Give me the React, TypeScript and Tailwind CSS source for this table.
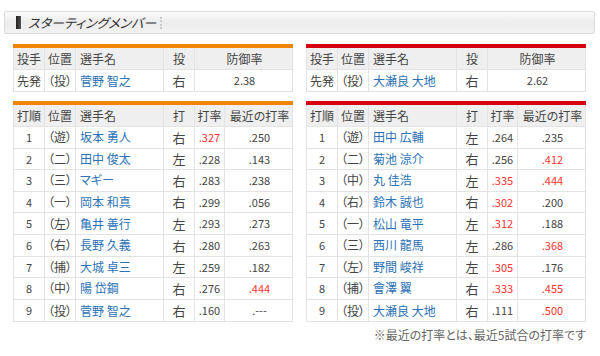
const font = { fontFamily: '"Noto Sans CJK JP", "Noto Sans", sans-serif' };

type Batter = { order: number; pos: string; name: string; hand: string; avg: string; recent: string; avgRed?: boolean; recentRed?: boolean };

const giants: Batter[] = [
  { order: 1, pos: '遊', name: '坂本 勇人', hand: '右', avg: '.327', recent: '.250', avgRed: true },
  { order: 2, pos: '二', name: '田中 俊太', hand: '左', avg: '.228', recent: '.143' },
  { order: 3, pos: '三', name: 'マギー', hand: '右', avg: '.283', recent: '.238' },
  { order: 4, pos: '一', name: '岡本 和真', hand: '右', avg: '.299', recent: '.056' },
  { order: 5, pos: '左', name: '亀井 善行', hand: '左', avg: '.293', recent: '.273' },
  { order: 6, pos: '右', name: '長野 久義', hand: '右', avg: '.280', recent: '.263' },
  { order: 7, pos: '捕', name: '大城 卓三', hand: '左', avg: '.259', recent: '.182' },
  { order: 8, pos: '中', name: '陽 岱鋼', hand: '右', avg: '.276', recent: '.444', recentRed: true },
  { order: 9, pos: '投', name: '菅野 智之', hand: '右', avg: '.160', recent: '.---' },
];

const carp: Batter[] = [
  { order: 1, pos: '遊', name: '田中 広輔', hand: '左', avg: '.264', recent: '.235' },
  { order: 2, pos: '二', name: '菊池 涼介', hand: '右', avg: '.256', recent: '.412', recentRed: true },
  { order: 3, pos: '中', name: '丸 佳浩', hand: '左', avg: '.335', recent: '.444', avgRed: true, recentRed: true },
  { order: 4, pos: '右', name: '鈴木 誠也', hand: '右', avg: '.302', recent: '.200', avgRed: true },
  { order: 5, pos: '一', name: '松山 竜平', hand: '左', avg: '.312', recent: '.188', avgRed: true },
  { order: 6, pos: '三', name: '西川 龍馬', hand: '左', avg: '.286', recent: '.368', recentRed: true },
  { order: 7, pos: '左', name: '野間 峻祥', hand: '左', avg: '.305', recent: '.176', avgRed: true },
  { order: 8, pos: '捕', name: '會澤 翼', hand: '右', avg: '.333', recent: '.455', avgRed: true, recentRed: true },
  { order: 9, pos: '投', name: '大瀬良 大地', hand: '右', avg: '.111', recent: '.500', recentRed: true },
];

const pcols = 'grid grid-cols-[31px_31px_88px_31px_99px]';
const bcols = 'grid grid-cols-[31px_31px_88px_31px_30px_69px]';
const cell = 'flex items-center justify-center border-r border-[#e3e3e3] last:border-r-0';

function PitcherTable({ bar, name, era }: { bar: string; name: string; era: string }) {
  return (
    <div className="w-[280px]">
      <div className={`h-[4px] ${bar}`} />
      <div className="border-x border-b border-[#e3e3e3]">
        <div className={`${pcols} h-[22px] bg-[#efefef] border-b border-[#e3e3e3] text-[12px] text-[#444]`}>
          <div className={cell}>投手</div>
          <div className={cell}>位置</div>
          <div className={`${cell} !justify-start pl-[4px]`}>選手名</div>
          <div className={cell}>投</div>
          <div className={cell}>防御率</div>
        </div>
        <div className={`${pcols} h-[21px] text-[12px] text-[#444]`}>
          <div className={cell}>先発</div>
          <div className={cell}>（投）</div>
          <div className={`${cell} !justify-start pl-[4px] text-[#2b72b6]`}>{name}</div>
          <div className={`${cell} text-[13px]`}>右</div>
          <div className={`${cell} text-[11px]`}>{era}</div>
        </div>
      </div>
    </div>
  );
}

function BattingTable({ bar, rows }: { bar: string; rows: Batter[] }) {
  return (
    <div className="w-[280px]">
      <div className={`h-[4px] ${bar}`} />
      <div className="border-x border-b border-[#e3e3e3]">
        <div className={`${bcols} h-[22px] bg-[#efefef] border-b border-[#e3e3e3] text-[12px] text-[#444]`}>
          <div className={cell}>打順</div>
          <div className={cell}>位置</div>
          <div className={`${cell} !justify-start pl-[4px]`}>選手名</div>
          <div className={cell}>打</div>
          <div className={cell}>打率</div>
          <div className={cell}>最近の打率</div>
        </div>
        {rows.map(r => (
          <div key={r.order} className={`${bcols} h-[21.6px] border-b border-[#e3e3e3] last:border-b-0 text-[12px] text-[#444]`}>
            <div className={`${cell} text-[11px]`}>{r.order}</div>
            <div className={cell}>（{r.pos}）</div>
            <div className={`${cell} !justify-start pl-[4px] text-[#2b72b6]`}>{r.name}</div>
            <div className={`${cell} text-[13px]`}>{r.hand}</div>
            <div className={`${cell} text-[11px] ${r.avgRed ? 'text-[#ff3333]' : ''}`}>{r.avg}</div>
            <div className={`${cell} text-[11px] ${r.recentRed ? 'text-[#ff3333]' : ''}`}>{r.recent}</div>
          </div>
        ))}
      </div>
    </div>
  );
}

export default function App() {
  return (
    <div className="w-[600px] h-[356px] bg-white pt-[11px] [font-feature-settings:'palt']" style={font}>
      <div className="mx-[4px] w-[591px] h-[23px] flex items-center rounded-[2px] border border-[#dcdcdc] bg-gradient-to-b from-[#fbfbfb] via-[#ececec] to-[#f2f2f2]">
        <div className="ml-[11px] w-[5px] h-[13px] bg-gradient-to-r from-[#222] to-[#555]" />
        <div className="ml-[7px] text-[13px] text-[#333] italic leading-none">スターティングメンバー</div>
        <div className="ml-[4px] h-[12px] border-l-2 border-dotted border-[#c8c8c8]" />
      </div>

      <div className="flex gap-[13px] pl-[13px] mt-[10px]">
        <div className="flex flex-col gap-[9px]">
          <PitcherTable bar="bg-[#f08300]" name="菅野 智之" era="2.38" />
          <BattingTable bar="bg-[#f08300]" rows={giants} />
        </div>
        <div className="flex flex-col gap-[9px]">
          <PitcherTable bar="bg-[#d7000f]" name="大瀬良 大地" era="2.62" />
          <BattingTable bar="bg-[#d7000f]" rows={carp} />
          <div className="-mt-[5px] text-right text-[12px] text-[#666]">※最近の打率とは、最近5試合の打率です</div>
        </div>
      </div>
    </div>
  );
}
